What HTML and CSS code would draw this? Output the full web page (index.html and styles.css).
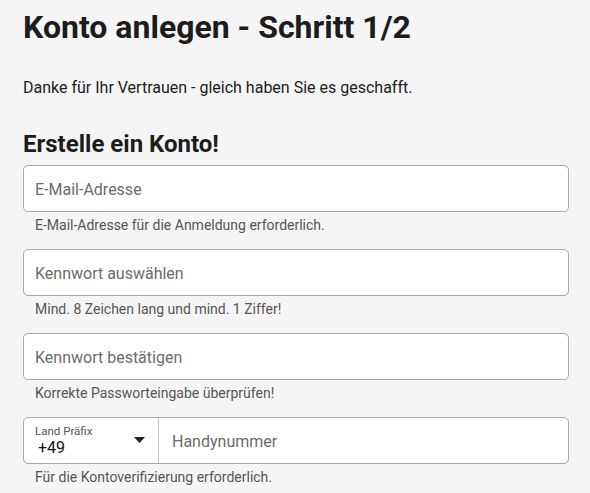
FILE: index.html
```html
<!DOCTYPE html>
<html lang="de">
  <head>
    <meta charset="utf-8" />
    <meta name="viewport" content="width=device-width,initial-scale=1.0" />
    <title>Konto anlegen</title>
    <link rel="stylesheet" href="styles.css">
  </head>
  <body>
    <main class="page">
      <h1 class="title">Konto anlegen - Schritt 1/2</h1>
      <p class="intro">Danke für Ihr Vertrauen - gleich haben Sie es geschafft.</p>
      <h2 class="subtitle">Erstelle ein Konto!</h2>
      <form class="signup">
        <div class="field">
          <input class="input" type="email" placeholder="E-Mail-Adresse" />
          <p class="hint">E-Mail-Adresse für die Anmeldung erforderlich.</p>
        </div>
        <div class="field">
          <input class="input" type="password" placeholder="Kennwort auswählen" />
          <p class="hint">Mind. 8 Zeichen lang und mind. 1 Ziffer!</p>
        </div>
        <div class="field">
          <input class="input" type="password" placeholder="Kennwort bestätigen" />
          <p class="hint">Korrekte Passworteingabe überprüfen!</p>
        </div>
        <div class="field">
          <div class="phone">
            <div class="prefix">
              <div class="prefix-text">
                <span class="prefix-label">Land Präfix</span>
                <span class="prefix-value">+49</span>
              </div>
              <svg class="caret" width="11" height="6" viewBox="0 0 11 6"><path d="M0 0h11L5.5 6z" fill="#222"/></svg>
            </div>
            <input class="phone-input" type="tel" placeholder="Handynummer" />
          </div>
          <p class="hint">Für die Kontoverifizierung erforderlich.</p>
        </div>
      </form>
    </main>
  </body>
</html>
```

FILE: styles.css
```css
body {
  margin: 0;
  background: #f5f5f5;
  color: #1c1c1c;
  font-family: Roboto, "Liberation Sans", Arial, sans-serif;
}

.page {
  padding: 6px 21px 0 23px;
}

.title {
  margin: 0;
  font-size: 32px;
  font-weight: 700;
  line-height: 42px;
}

.intro {
  margin: 30px 0 0;
  font-size: 16px;
  line-height: 20px;
}

.subtitle {
  margin: 31px 0 0;
  font-size: 24px;
  font-weight: 700;
  line-height: 30px;
}

.signup {
  margin-top: 6px;
}

.field {
  height: 84px;
}

.input,
.phone {
  display: block;
  width: 100%;
  height: 47px;
  box-sizing: border-box;
  border: 1px solid #a8a8a8;
  border-radius: 5px;
  background: #fff;
}

.input {
  padding: 1px 11px 0;
  font-family: inherit;
  font-size: 16px;
  color: #222;
}
.input::placeholder,
.phone-input::placeholder {
  color: #6b6b6b;
}

.hint {
  margin: 4px 0 0 12px;
  font-size: 14px;
  line-height: 18px;
  color: #555;
}

.phone {
  display: flex;
}

.prefix {
  width: 135px;
  box-sizing: border-box;
  border-right: 1px solid #c4c4c4;
  display: flex;
  align-items: center;
  padding: 0 13px 0 11px;
}
.prefix-text {
  flex-grow: 1;
  display: flex;
  flex-direction: column;
}
.prefix-label {
  font-size: 11.5px;
  line-height: 14px;
  color: #555;
}
.prefix-value {
  margin-left: 3px;
  font-size: 16px;
  line-height: 19px;
  color: #111;
}
.caret {
  margin-top: -1px;
}

.phone-input {
  flex-grow: 1;
  border: none;
  background: transparent;
  padding: 1px 13px 0;
  font-family: inherit;
  font-size: 16px;
  outline: none;
}
```
